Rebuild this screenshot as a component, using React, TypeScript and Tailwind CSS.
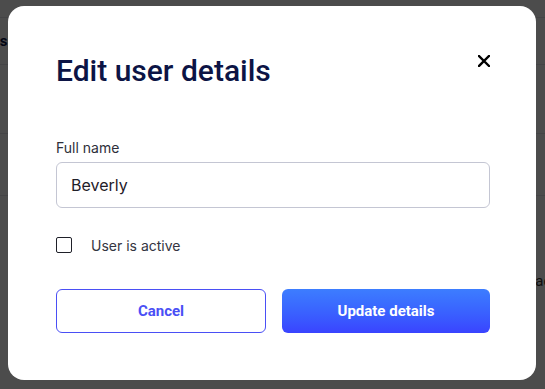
import { useState } from "react";

function CloseIcon() {
  return (
    <svg width="12" height="12" viewBox="0 0 12 12" fill="none">
      <path
        d="M1 1L11 11M11 1L1 11"
        stroke="#000"
        strokeWidth="2.4"
        strokeLinecap="square"
      />
    </svg>
  );
}

function BackgroundPage() {
  // the user table that sits behind the dialog
  return (
    <div className="h-[389px] w-full bg-white font-['Roboto',sans-serif] text-[#0c1445]">
      <div className="h-[17px]" />
      <div className="flex h-[47px] items-center border-t border-[#e3e4ea] font-bold text-[15px]">
        <span className="-ml-[36px]">Status</span>
      </div>
      <div className="h-[69px] border-t border-[#e3e4ea]" />
      <div className="h-[62px] border-t border-[#e3e4ea]" />
      <div className="flex h-[97px] items-end justify-end border-t border-[#e3e4ea] text-[15px]">
        <span className="-mr-[30px] text-[#333]">Inactive</span>
      </div>
    </div>
  );
}

export default function App() {
  const [name, setName] = useState("Beverly");
  const [active, setActive] = useState(false);

  return (
    <div className="relative h-[389px] w-full overflow-hidden">
      <BackgroundPage />
      <div className="absolute inset-0 bg-black/70" />

      <div className="absolute left-[8px] top-[6px] h-[374px] w-[528px] rounded-[16px] bg-white pl-12 pr-[46px] pt-[47px]">
        <div className="flex items-start justify-between">
          <h2 className="font-['Roboto',sans-serif] text-[30px] font-medium leading-[36px] text-[#0c1445]">
            Edit user details
          </h2>
          <button className="mt-[2px]" aria-label="Close">
            <CloseIcon />
          </button>
        </div>

        <label className="mt-[49px] mb-1 block font-['Inter',sans-serif] text-[14px] leading-5 text-[#2e2f3a]">
          Full name
        </label>
        <input
          value={name}
          onChange={(e) => setName(e.target.value)}
          className="block h-[46px] w-full rounded-[6px] border border-[#c4c6d3] px-[14px] font-['Inter',sans-serif] text-[16px] text-[#1f2029] outline-none"
        />

        <label className="mt-[27px] flex h-5 items-center gap-[19px] font-['Inter',sans-serif] text-[14px] text-[#343541]">
          <input
            type="checkbox"
            checked={active}
            onChange={(e) => setActive(e.target.checked)}
            className="h-4 w-4 appearance-none rounded-[2px] border-[1.5px] border-[#1f2029] bg-white"
          />
          User is active
        </label>

        <div className="mt-[34px] flex gap-4">
          <button className="h-[44px] flex-1 rounded-[6px] border border-[#4a4ff5] font-['Roboto',sans-serif] text-[15px] font-bold text-[#4a4ff5]">
            Cancel
          </button>
          <button className="h-[44px] flex-1 rounded-[6px] bg-gradient-to-b from-[#3d7dff] to-[#3a43ff] font-['Roboto',sans-serif] text-[15px] font-bold text-white">
            Update details
          </button>
        </div>
      </div>
    </div>
  );
}
